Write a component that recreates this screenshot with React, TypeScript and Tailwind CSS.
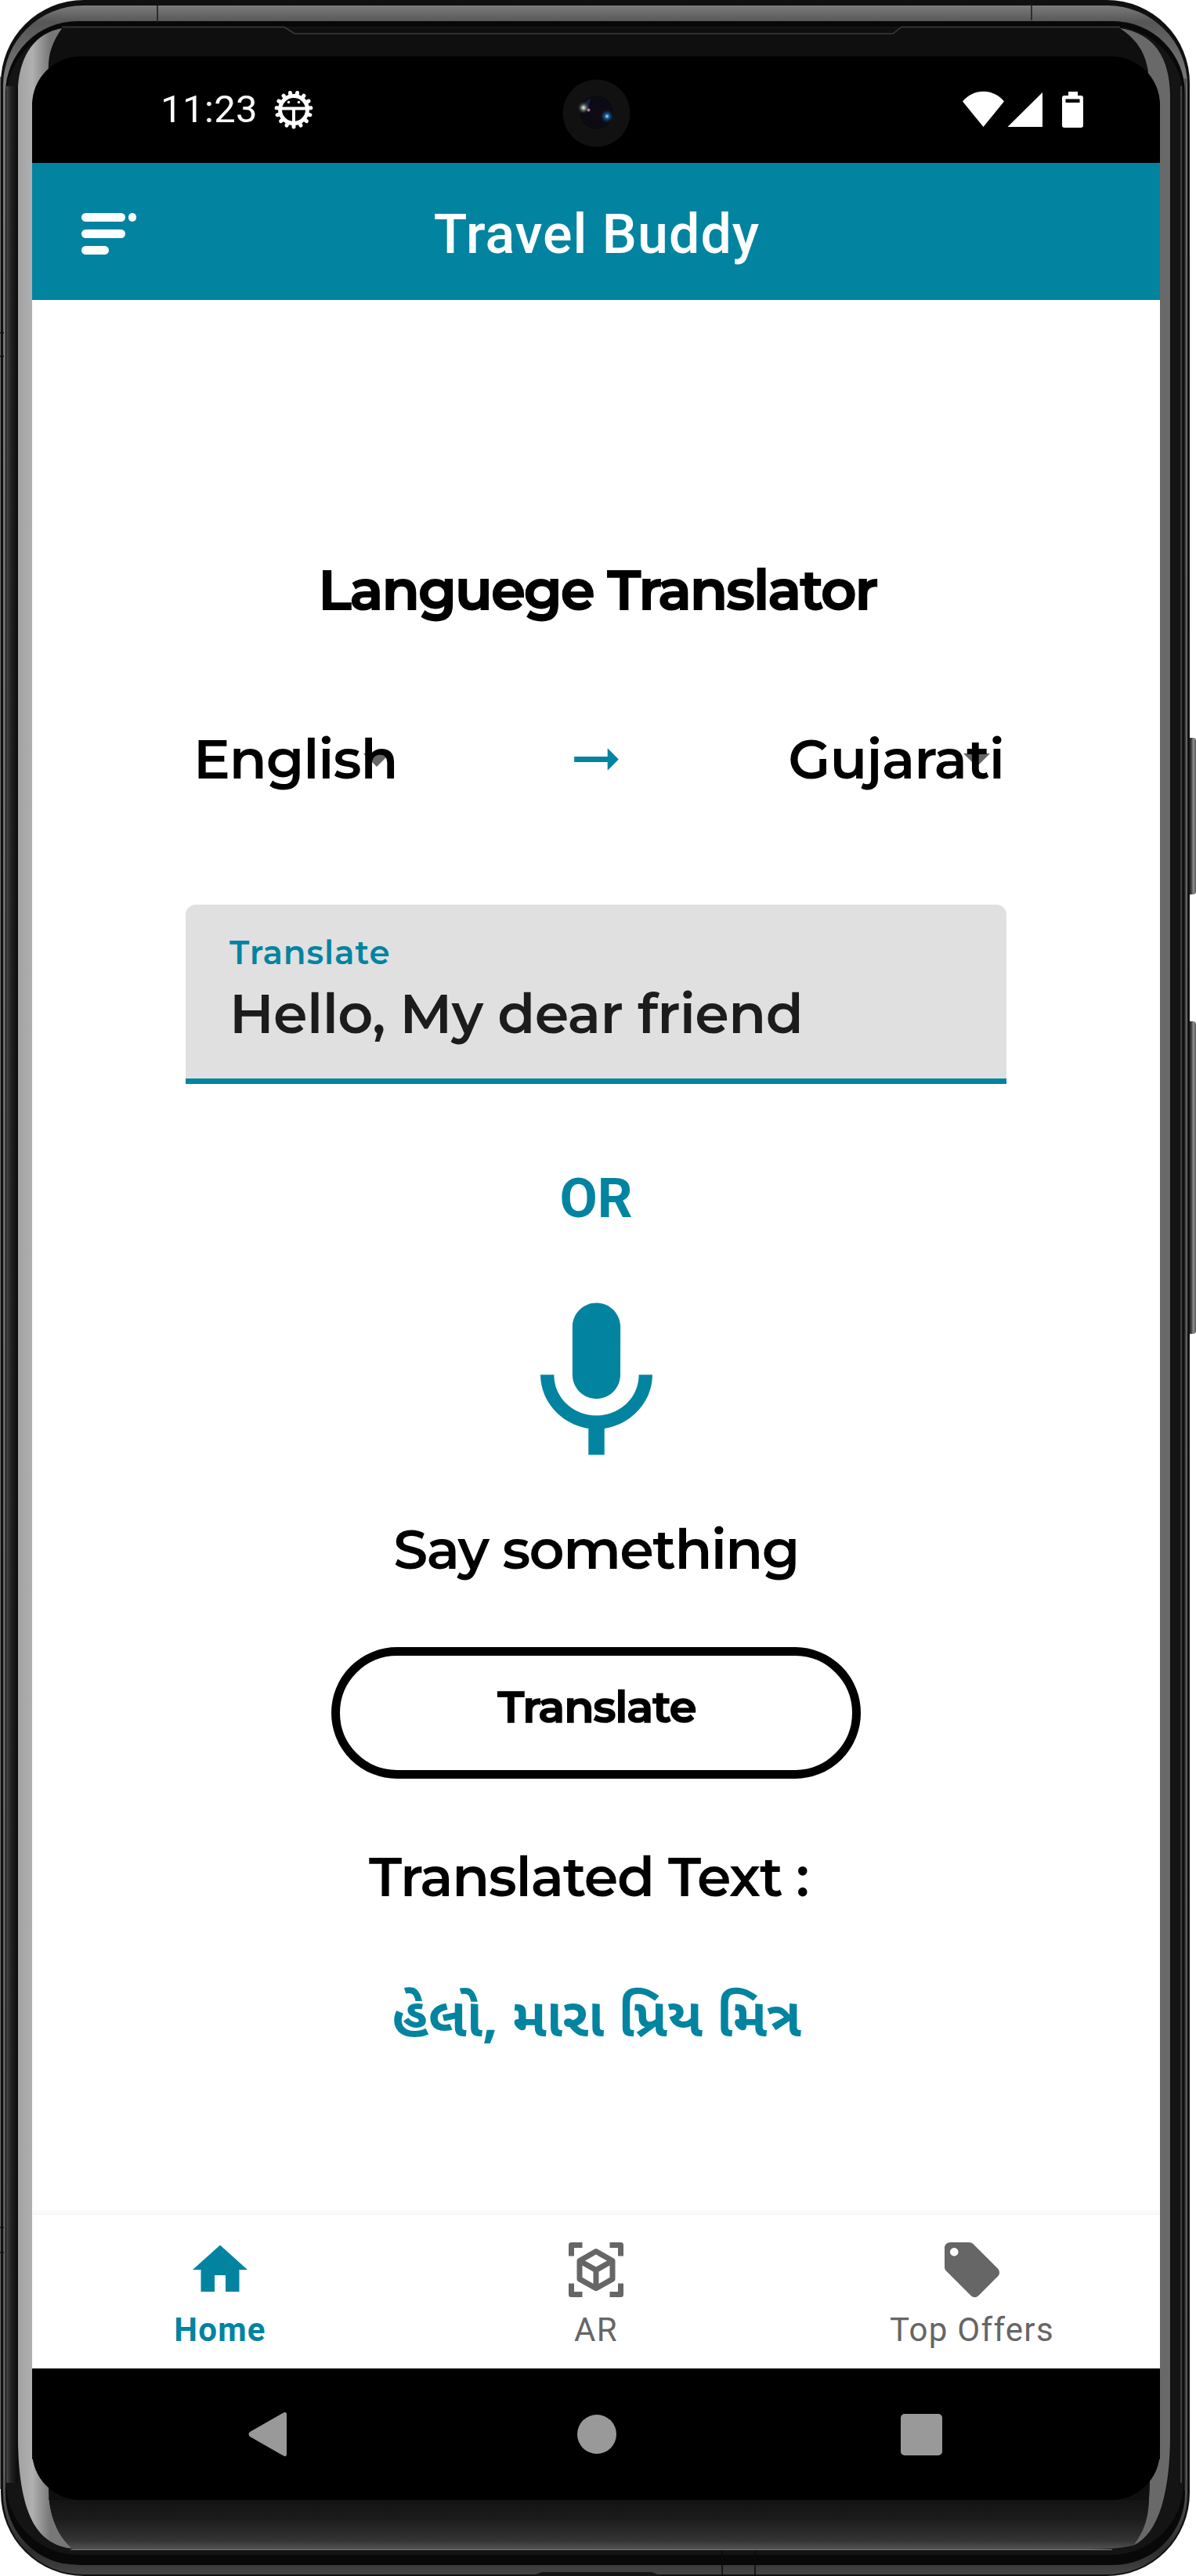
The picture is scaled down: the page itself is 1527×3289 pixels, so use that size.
import React from "react";

const TEETH = Array.from({ length: 15 }, (_, i) => {
  const a = Math.PI / 2 + (i * 2 * Math.PI) / 15;
  return { x1: 25 + 18 * Math.cos(a), y1: 25 + 18 * Math.sin(a), x2: 25 + 22 * Math.cos(a), y2: 25 + 22 * Math.sin(a) };
});

function DeviceFrame() {
  return (
    <svg className="absolute left-0 top-0 h-[3289px] w-[1527px]" viewBox="0 0 1527 3289" aria-hidden="true">
      <defs>
        <linearGradient id="rim" gradientUnits="userSpaceOnUse" x1="0" y1="7" x2="0" y2="3289">
          <stop offset="0" stopColor="#7b7b7b" />
          <stop offset="0.0065" stopColor="#565656" />
          <stop offset="0.03" stopColor="#7a7a7a" />
          <stop offset="0.96" stopColor="#5a5a5a" />
          <stop offset="0.99" stopColor="#2c2c2c" />
          <stop offset="1" stopColor="#464646" />
        </linearGradient>
        <linearGradient id="edgeL" x1="0" x2="1" y1="0" y2="0">
          <stop offset="0" stopColor="#4a4a4a" />
          <stop offset="0.35" stopColor="#262626" />
          <stop offset="1" stopColor="#0a0a0a" />
        </linearGradient>
        <linearGradient id="glassL" gradientUnits="userSpaceOnUse" x1="23" y1="0" x2="64" y2="0">
          <stop offset="0" stopColor="#a2a2a2" />
          <stop offset="0.45" stopColor="#b0b0b0" />
          <stop offset="1" stopColor="#777777" />
        </linearGradient>
        <linearGradient id="chin" x1="0" x2="0" y1="0" y2="1">
          <stop offset="0" stopColor="#0e0e0e" />
          <stop offset="0.5" stopColor="#1b1b1b" />
          <stop offset="0.85" stopColor="#333333" />
          <stop offset="1" stopColor="#525252" />
        </linearGradient>
        <linearGradient id="key" x1="0" x2="1" y1="0" y2="0">
          <stop offset="0" stopColor="#222222" />
          <stop offset="0.5" stopColor="#333333" />
          <stop offset="0.75" stopColor="#8f8f8f" />
          <stop offset="1" stopColor="#555555" />
        </linearGradient>
      </defs>
      <rect x="1514" y="942" width="13" height="200" rx="4" fill="url(#key)" />
      <rect x="1514" y="1304" width="13" height="399" rx="4" fill="url(#key)" />
      <rect x="0" y="98" width="4" height="3080" fill="#6b6b6b" />
      <rect x="1" y="0" width="1518" height="3289" rx="106" fill="#101010" />
      <rect x="4" y="7" width="1512" height="3280" rx="102" fill="url(#rim)" />
      <rect x="7" y="27" width="1506" height="3248" rx="92" fill="#080808" />
      <rect x="8" y="34" width="1503" height="3228" rx="92" fill="#141414" />
      <rect x="8" y="110" width="15" height="3060" fill="url(#edgeL)" />
      <path d="M1508 110V3170M1513.5 100V3180" stroke="#404040" strokeWidth="2" />
      <path d="M0 425h5M0 455h5M0 2844h5M0 2876h5" stroke="#111111" strokeWidth="1.5" />
      <path d="M201 7V29M1317 4V26" stroke="#1a1a1a" strokeWidth="1.5" />
      <path d="M23 110C26 70 45 36 110 36H1420C1472 38 1494 75 1495 120V3120C1494 3210 1470 3255 1380 3255H110C50 3253 25 3215 23 3120Z" fill="#0f0f0f" />
      <path d="M23 110C26 70 45 42 79 36C66 55 61 70 62 92L62 130H41V3140L62 3140V3176C62 3210 73 3238 93 3254C50 3250 25 3215 23 3120Z" fill="url(#glassL)" />
      <path d="M1494 120C1493 75 1475 43 1430 36C1450 50 1462 65 1466 92V130H1481V3140H1468V3168C1468 3200 1462 3230 1447 3250C1480 3235 1494 3180 1494 3110Z" fill="#696969" />
      <path d="M62 3176V3192H1467C1466 3220 1458 3236 1447 3250C1430 3254 1410 3255 1380 3255H93C73 3238 62 3210 62 3176Z" fill="url(#chin)" />
      <path d="M79 34.5H363L376 43H1140L1151 34.5H1430" stroke="#3c3c3c" strokeWidth="1.5" fill="none" />
      <path d="M90 3255.5H1420" stroke="#777777" strokeWidth="1" />
      <path d="M60 3270.5C80 3274 100 3276 120 3276H1400" stroke="#3a3a3a" strokeWidth="1" fill="none" />
      <path d="M922 3256V3289M964 3256V3289" stroke="#0a0a0a" strokeWidth="1.5" />
      <path d="M678 3289L692 3284H832L845 3289Z" fill="#151515" />
    </svg>
  );
}

function StatusBar() {
  return (
    <div className="relative flex h-[136px] items-center justify-between bg-black pl-[164px] pr-[98px] text-white">
      <div className="flex items-center gap-[21px] pb-[3px]">
        <span className="pt-[3px] font-['Roboto',sans-serif] text-[49px] leading-[60px] tracking-[0.4px]">11:23</span>
        <svg className="mt-[3px] h-[50px] w-[50px]" viewBox="0 0 50 50">
          {TEETH.map((t, i) => (
            <line key={i} {...t} stroke="#fff" strokeWidth="5" strokeLinecap="round" />
          ))}
          <circle cx="25" cy="25" r="17.5" fill="none" stroke="#fff" strokeWidth="5" />
          <path d="M9 23.5H41M25 24V42" stroke="#fff" strokeWidth="4" />
          <circle cx="18.5" cy="15.5" r="1.7" fill="#fff" />
          <circle cx="31.5" cy="15.5" r="1.7" fill="#fff" />
        </svg>
      </div>
      <svg className="absolute left-[677px] top-[29px] h-[87px] w-[87px]" viewBox="0 0 87 87">
        <defs>
          <radialGradient id="lens">
            <stop offset="0" stopColor="#100a12" />
            <stop offset="0.7" stopColor="#0b0a14" />
            <stop offset="1" stopColor="#0a0d12" />
          </radialGradient>
          <radialGradient id="flareA">
            <stop offset="0" stopColor="#f4f6e8" />
            <stop offset="0.35" stopColor="#7c8474" />
            <stop offset="1" stopColor="#11161c" stopOpacity="0" />
          </radialGradient>
          <radialGradient id="flareB">
            <stop offset="0" stopColor="#bfe6ff" />
            <stop offset="0.3" stopColor="#1d63a0" />
            <stop offset="1" stopColor="#071a33" stopOpacity="0" />
          </radialGradient>
        </defs>
        <circle cx="43.5" cy="43.5" r="43" fill="#111111" />
        <circle cx="43.5" cy="42.5" r="20.5" fill="url(#lens)" stroke="#08090a" />
        <path d="M27 31A20 20 0 0 1 36 25L33 38L25 43Z" fill="#1b2c52" opacity="0.7" />
        <circle cx="27" cy="36.5" r="8" fill="url(#flareA)" />
        <circle cx="33.5" cy="39.5" r="2" fill="#a77ba0" />
        <circle cx="57" cy="47.5" r="9" fill="url(#flareB)" />
      </svg>
      <svg className="mb-[1px] h-[48px] w-[154px]" viewBox="0 0 154 48" fill="#fff">
        <path d="M0 13.5C14 -3.5 39 -3.5 53 13.5L26.5 46Z" />
        <path d="M102 2V46H57.500Z" />
        <path fillRule="evenodd" d="M135 1H147V6H151Q154 6 154 9V44Q154 47 151 47H130Q127 47 127 44V9Q127 6 130 6H135ZM131.500 10.500V15H149.500V10.500Z" />
      </svg>
    </div>
  );
}

function AppBar() {
  return (
    <header className="relative flex h-[175px] items-center justify-center bg-[#0284a1]">
      <div className="absolute left-[63px] top-[64px] flex flex-col gap-[10px]">
        <div className="flex gap-[4px]">
          <div className="h-[11px] w-[56px] rounded-full bg-white" />
          <div className="h-[11px] w-[10px] rounded-full bg-white" />
        </div>
        <div className="h-[11px] w-[56px] rounded-full bg-white" />
        <div className="h-[11px] w-[35px] rounded-full bg-white" />
      </div>
      <h1 className="pl-[2px] pt-[7px] font-['Roboto',sans-serif] text-[70px] font-medium leading-[86px] tracking-[1px] text-white">
        Travel Buddy
      </h1>
    </header>
  );
}

function Caret({ className }: { className: string }) {
  return (
    <svg className={className} viewBox="0 0 34 17" fill="#666666">
      <path d="M0 0H34L17 17Z" />
    </svg>
  );
}

function Translator() {
  return (
    <main className="flex h-[2445px] flex-col items-center bg-white font-['Montserrat',sans-serif] text-[70px] font-semibold leading-[86px] text-black shadow-[inset_0_-8px_8px_-6px_rgba(0,0,0,0.06)]">
      <h2 className="mt-[327px] pl-[4px] tracking-[-1.6px] [-webkit-text-stroke:2px_black]">Languege Translator</h2>
      <div className="mt-[130px] grid w-[1028px] grid-cols-[1fr_85px_1fr] items-center">
        <div className="relative justify-self-start tracking-[-1.1px]">
          <Caret className="absolute left-[217px] top-[36px] h-[17px] w-[34px]" />
          <span className="relative">English</span>
        </div>
        <svg className="h-[85px] w-[85px]" viewBox="0 0 24 24" fill="#0284a1">
          <path d="M16.010 11H4v2h12.010v3L20 12l-3.990-4z" />
        </svg>
        <div className="relative -mr-[7px] justify-self-end tracking-[-1px]">
          <Caret className="absolute right-[18px] top-[36px] h-[17px] w-[34px]" />
          <span className="relative">Gujarati</span>
        </div>
      </div>
      <div className="mt-[143px] h-[229px] w-[1048px] rounded-t-[13px] border-b-[7px] border-[#0284a1] bg-[#e0e0e0] pl-[56px] pt-[36px]">
        <div className="text-[42px] leading-[50px] tracking-[0.9px] text-[#0284a1]">Translate</div>
        <div className="mt-[10px] tracking-[-0.6px] text-[#1c1c1c]">Hello, My dear friend</div>
      </div>
      <div className="mt-[103px] font-['Roboto',sans-serif] font-bold text-[#0284a1]">OR</div>
      <svg className="mt-[70px] h-[245px] w-[245px] shrink-0" viewBox="0 0 24 24" fill="#0284a1">
        <path d="M12 14c1.660 0 2.990-1.340 2.990-3L15 5c0-1.660-1.340-3-3-3S9 3.340 9 5v6c0 1.660 1.340 3 3 3zm5.300-3c0 3-2.540 5.100-5.300 5.100S6.700 14 6.700 11H5c0 3.410 2.720 6.230 6 6.720V21h2v-3.280c3.280-.480 6-3.300 6-6.720h-1.700z" />
      </svg>
      <p className="mt-[47px] tracking-[-1.6px]">Say something</p>
      <button className="mt-[82px] flex h-[168px] w-[676px] items-center justify-center rounded-full border-[11px] border-black pb-[16px] pl-[2px] text-[56px] font-semibold leading-[70px] tracking-[-1.1px] [-webkit-text-stroke:1.6px_black]">
        Translate
      </button>
      <p className="mt-[82px] pr-[19px] tracking-[-1.3px]">Translated Text :</p>
      <p className="mt-[101px] pl-[2px] font-['Noto_Sans_Gujarati',sans-serif] text-[69.5px] font-bold text-[#0284a1]">હેલો, મારા પ્રિય મિત્ર</p>
    </main>
  );
}

function BottomNav() {
  const item = "flex flex-col items-center gap-[10px] pt-[28px]";
  return (
    <nav className="grid h-[196px] grid-cols-3 bg-white font-['Roboto',sans-serif] text-[42px] leading-[50px] tracking-[1.3px] text-[#666666]">
      <div className={item}>
        <svg className="h-[84px] w-[84px]" viewBox="0 0 24 24" fill="#0284a1">
          <path d="M10 20v-6h4v6h5v-8h3L12 3 2 12h3v8z" />
        </svg>
        <span className="font-bold text-[#0284a1]">Home</span>
      </div>
      <div className={item}>
        <svg className="h-[84px] w-[84px]" viewBox="0 0 24 24" fill="none" stroke="#666666" strokeWidth="2" strokeLinejoin="round">
          <path d="M3 7V3H7M17 3H21V7M21 17V21H17M7 21H3V17" />
          <path d="M12 5.300L18 8.700V15.400L12 18.800L6 15.400V8.700ZM6 8.700L12 12.100L18 8.700M12 12.100V18.800" />
        </svg>
        <span>AR</span>
      </div>
      <div className={item}>
        <svg className="h-[84px] w-[84px]" viewBox="0 0 24 24" fill="#666666">
          <path d="M21.410 11.580l-9-9C12.050 2.220 11.550 2 11 2H4c-1.100 0-2 .900-2 2v7c0 .550.220 1.050.590 1.420l9 9c.360.360.860.580 1.410.580.550 0 1.050-.220 1.410-.590l7-7c.370-.360.590-.860.590-1.410 0-.550-.230-1.060-.590-1.420zM5.500 7C4.670 7 4 6.330 4 5.500S4.670 4 5.500 4 7 4.670 7 5.500 6.330 7 5.500 7z" />
        </svg>
        <span>Top Offers</span>
      </div>
    </nav>
  );
}

function SystemNav() {
  return (
    <div className="flex h-[168px] items-center justify-between bg-black pl-[276px] pr-[278px]">
      <svg className="h-[58px] w-[56px]" viewBox="0 0 56 58" fill="#999999">
        <path d="M44 2Q49 -1 49 4V54Q49 59 44 56L2 32Q-1 29 2 26Z" />
      </svg>
      <div className="size-[50px] rounded-full bg-[#999999]" />
      <div className="size-[53px] rounded-[5px] bg-[#999999]" />
    </div>
  );
}

export default function App() {
  return (
    <div className="relative h-[3289px] w-[1527px] overflow-hidden bg-white pl-[41px] pt-[72px]">
      <DeviceFrame />
      <div className="relative flex w-[1440px] flex-col overflow-hidden rounded-[62px]">
        <StatusBar />
        <AppBar />
        <Translator />
        <BottomNav />
        <SystemNav />
      </div>
    </div>
  );
}
